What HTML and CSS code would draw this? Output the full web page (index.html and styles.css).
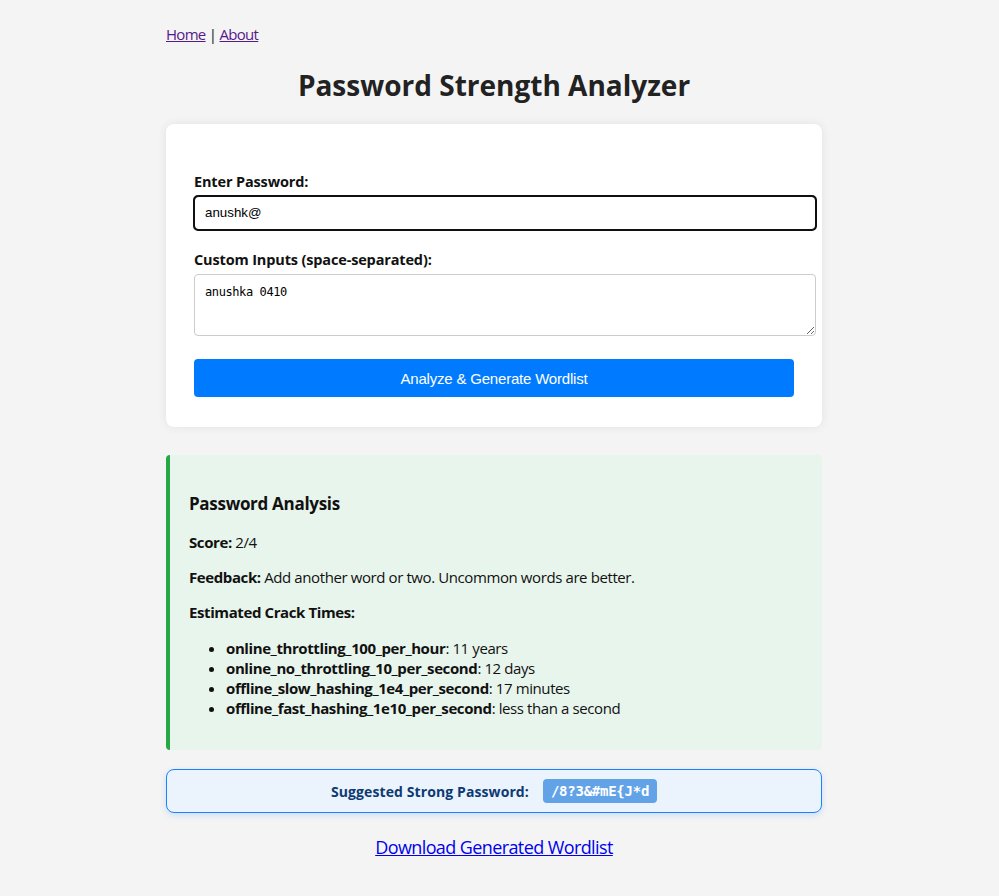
FILE: index.html
```html
<!DOCTYPE html>
<html lang="en">
<head>
<meta charset="utf-8">
<title>Password Strength Analyzer</title>
<link rel="stylesheet" href="styles.css">
</head>
<body>
<div class="page">
  <nav class="nav"><a href="#home" class="visited">Home</a> | <a href="#about" class="visited">About</a></nav>
  <h1 class="title">Password Strength Analyzer</h1>
  <form class="card">
    <label class="label" for="pw">Enter Password:</label>
    <input id="pw" class="input focused" type="text" value="anushk@" spellcheck="true">
    <label class="label" for="custom">Custom Inputs (space-separated):</label>
    <textarea id="custom" class="textarea">anushka 0410</textarea>
    <button type="button" class="btn">Analyze &amp; Generate Wordlist</button>
  </form>
  <section class="result">
    <h3 class="result-title">Password Analysis</h3>
    <p class="line"><strong>Score:</strong> 2/4</p>
    <p class="line"><strong>Feedback:</strong> Add another word or two. Uncommon words are better.</p>
    <p class="line"><strong>Estimated Crack Times:</strong></p>
    <ul class="times">
      <li><strong>online_throttling_100_per_hour</strong>: 11 years</li>
      <li><strong>online_no_throttling_10_per_second</strong>: 12 days</li>
      <li><strong>offline_slow_hashing_1e4_per_second</strong>: 17 minutes</li>
      <li><strong>offline_fast_hashing_1e10_per_second</strong>: less than a second</li>
    </ul>
  </section>
  <div class="suggest">
    <span class="suggest-label">Suggested Strong Password:</span>
    <code class="suggest-code">/8?3&amp;#mE{J*d</code>
  </div>
  <div class="download"><a href="#download">Download Generated Wordlist</a></div>
</div>
</body>
</html>
```
FILE: styles.css
```css
html, body {
  margin: 0;
  padding: 0;
  background: #f4f4f4;
}
body {
  font-family: "Open Sans", "Noto Sans", sans-serif;
  color: #111;
  padding-right: 11px;
}
.page {
  width: 656px;
  margin: 0 auto;
  padding-top: 24px;
}
.nav {
  font-size: 15px;
  line-height: 20px;
  color: #111;
  letter-spacing: -0.7px;
}
.nav a {
  color: #551a8b;
}
.title {
  margin: 23px 0 0;
  text-align: center;
  font-size: 28px;
  line-height: 36px;
  font-weight: 700;
  color: #222;
  letter-spacing: 0;
}
.card {
  margin-top: 21px;
  background: #fff;
  border-radius: 8px;
  box-shadow: 0 0 10px rgba(0,0,0,0.08);
  padding: 48px 28px 30px;
  display: flex;
  flex-direction: column;
}
.label {
  font-weight: 700;
  font-size: 14.5px;
  line-height: 20px;
  letter-spacing: -0.15px;
  margin-bottom: 4px;
}
.input {
  width: 600px;
  box-sizing: content-box;
  padding: 8px 10px;
  border: 1px solid #ccc;
  border-radius: 4px;
  font-family: "Liberation Sans", Arial, sans-serif;
  font-size: 13.33px;
  line-height: 16px;
  margin-bottom: 20px;
  background: #fff;
}
.input.focused {
  outline: 2px solid #101010;
  outline-offset: -1px;
  border-color: #101010;
}
.textarea {
  width: 600px;
  box-sizing: content-box;
  height: 42px;
  padding: 9px 10px;
  border: 1px solid #ccc;
  border-radius: 4px;
  font-family: "DejaVu Sans Mono", monospace;
  font-size: 12px;
  letter-spacing: -0.4px;
  line-height: 16px;
  margin-bottom: 23px;
  resize: vertical;
}
.btn {
  width: 600px;
  height: 38px;
  background: #007bff;
  color: #fff;
  border: none;
  border-radius: 4px;
  font-family: "Liberation Sans", Arial, sans-serif;
  font-size: 15px;
  letter-spacing: -0.2px;
}
.result {
  margin-top: 28px;
  background: #e8f5ec;
  border-left: 4px solid #28a745;
  border-radius: 4px;
  padding: 37px 19px 32px;
}
.result-title {
  margin: 0 0 16px;
  font-size: 17px;
  line-height: 24px;
  font-weight: 700;
  letter-spacing: -0.3px;
}
.line {
  margin: 0 0 15px;
  font-size: 15px;
  line-height: 20px;
  letter-spacing: -0.4px;
}
.times {
  margin: 16px 0 0;
  padding-left: 37px;
  font-size: 15px;
  line-height: 20px;
  letter-spacing: -0.4px;
}
.suggest {
  margin-top: 19px;
  background: #ebf3fd;
  border: 1px solid #1a82ff;
  border-radius: 8px;
  box-shadow: 0 2px 6px rgba(0,123,255,0.18);
  height: 42px;
  display: flex;
  align-items: center;
  justify-content: center;
  gap: 14px;
}
.suggest-label {
  font-weight: 700;
  font-size: 14px;
  color: #0d3a73;
  letter-spacing: 0.1px;
}
.suggest-code {
  background: #62a3e8;
  color: #fff;
  font-family: "DejaVu Sans Mono", monospace;
  font-weight: 700;
  font-size: 14px;
  line-height: 24px;
  padding: 0 8px;
  border-radius: 4px;
  letter-spacing: -0.25px;
}
.download {
  text-align: center;
  margin-top: 22px;
  font-size: 18px;
  line-height: 24px;
  letter-spacing: -0.6px;
}
.download a {
  color: #0000ee;
}
```
